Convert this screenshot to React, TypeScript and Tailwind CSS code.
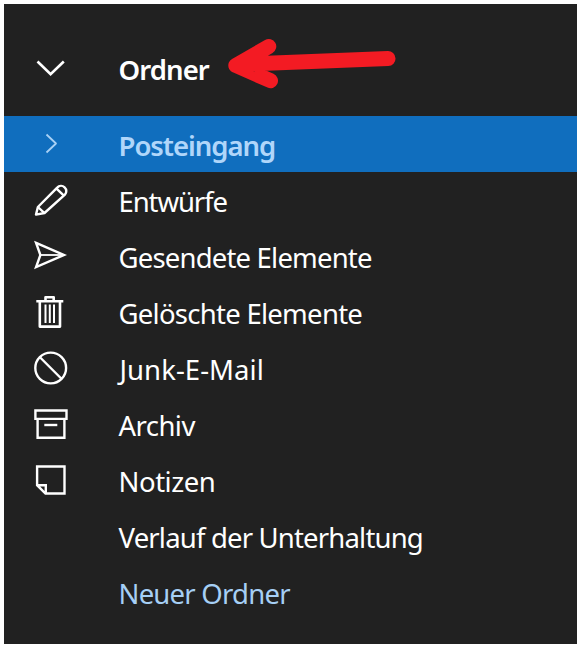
import type { ReactNode } from "react";

type Folder = {
  label: string;
  textClass: string;
  rowClass?: string;
  iconClass?: string;
  icon?: ReactNode;
};

const folders: Folder[] = [
  {
    label: "Posteingang",
    textClass: "font-semibold tracking-[-1.03px] text-[#b0d6fa]",
    rowClass: "bg-[#106ebe]",
    iconClass: "text-[#a9d1f5]",
    icon: <path d="M26.5 18.5 36 27.5 26.5 36.5" strokeWidth="1.8" />,
  },
  {
    label: "Entwürfe",
    textClass: "tracking-[-1.1px]",
    icon: (
      <>
        <path d="M16 42.6 17.9 35 37.2 15.6A5 5 0 0 1 44.9 22.7L24.5 41Z" />
        <path d="M17.9 35 24.5 41.2M36.5 16.6 43.9 23.6" />
      </>
    ),
  },
  {
    label: "Gesendete Elemente",
    textClass: "tracking-[-0.81px]",
    icon: (
      <>
        <path d="M16.1 14.9 44 27 16.1 39.1 20.4 27Z" strokeLinejoin="miter" />
        <path d="M20.5 27H43" strokeWidth="1.8" />
      </>
    ),
  },
  {
    label: "Gelöschte Elemente",
    textClass: "tracking-[-0.73px]",
    icon: (
      <>
        <path
          d="M16.3 17.3H43.3M25.5 17V13.2H33.7V17M19.8 17.3V42.6H40V17.3"
          strokeWidth="2.6"
        />
        <path d="M25.5 20.5V39M29.8 20.5V39M34 20.5V39" strokeWidth="2" />
      </>
    ),
  },
  {
    label: "Junk-E-Mail",
    textClass: "pl-px tracking-[0.05px]",
    icon: (
      <>
        <circle cx="30.7" cy="28" r="15.4" />
        <path d="M19.7 17 41.7 39" />
      </>
    ),
  },
  {
    label: "Archiv",
    textClass: "tracking-[-0.55px]",
    icon: (
      <>
        <path d="M15.4 14.5H46.5V22.9H15.4ZM17.6 23.4V41.8H44.4V23.4" strokeLinejoin="miter" />
        <path d="M24.3 29H37.3" />
      </>
    ),
  },
  {
    label: "Notizen",
    textClass: "tracking-[-0.45px]",
    icon: (
      <path
        d="M17.1 14.5H44.5V41.5H25.5L17.1 33.2ZM17 33.2H25.8V41.2"
        strokeLinejoin="miter"
      />
    ),
  },
  { label: "Verlauf der Unterhaltung", textClass: "tracking-[-0.82px]" },
  { label: "Neuer Ordner", textClass: "tracking-[-0.77px] text-[#a6cff5]" },
];

function Glyph({ children, className = "" }: { children?: ReactNode; className?: string }) {
  return (
    <svg
      viewBox="0 0 60 56"
      className={`ml-4 h-14 w-[60px] shrink-0 ${className}`}
      fill="none"
      stroke="currentColor"
      strokeWidth="2.4"
      strokeLinejoin="round"
      aria-hidden="true"
    >
      {children}
    </svg>
  );
}

export default function App() {
  return (
    <div className="h-[648px] w-[581px] bg-white p-1">
      <nav className="h-[640px] w-[573px] overflow-hidden bg-[#212121] font-['Noto_Sans',sans-serif] text-[27.5px] leading-[56px] text-white">
        <div className="flex h-28 items-center pb-px">
          <Glyph>
            <path
              d="M17.5 29.5 30.6 42.3 43.8 29.5"
              strokeWidth="2.6"
              strokeLinejoin="miter"
            />
          </Glyph>
          <span className="ml-[38.5px] mt-[21px] w-[94.5px] whitespace-nowrap font-semibold tracking-[-0.9px]">
            Ordner
          </span>
          <svg
            viewBox="0 0 180 60"
            className="ml-3 mt-2 h-[60px] w-[180px]"
            fill="none"
            stroke="#f31b23"
            strokeWidth="15"
            strokeLinecap="round"
            strokeLinejoin="round"
            aria-hidden="true"
          >
            <path d="M163 24.6 42 29.2 10.8 31.5M43.8 12.4 10.8 31.5 45.5 46.7" />
          </svg>
        </div>
        <ul>
          {folders.map((folder) => (
            <li key={folder.label} className={`flex h-14 items-center ${folder.rowClass ?? ""}`}>
              <Glyph className={folder.iconClass}>{folder.icon}</Glyph>
              <span className={`ml-[38.5px] mt-1 whitespace-nowrap ${folder.textClass}`}>
                {folder.label}
              </span>
            </li>
          ))}
        </ul>
      </nav>
    </div>
  );
}
